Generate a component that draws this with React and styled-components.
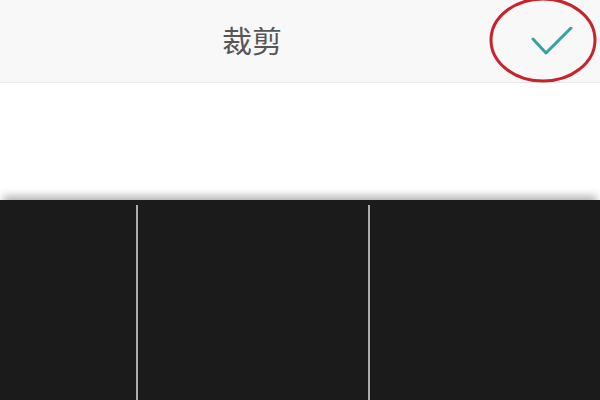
import styled, { createGlobalStyle } from "styled-components";

const GlobalStyle = createGlobalStyle`
  html, body {
    margin: 0;
    padding: 0;
    width: 600px;
    height: 400px;
    overflow: hidden;
    background: #ffffff;
  }
`;

function App() {
  return (
    <Screen>
      <GlobalStyle />
      <Header>
        <Title>裁剪</Title>
        <Confirm>
          <CheckIcon />
          <Circle viewBox="0 0 112 88">
            <ellipse cx="55" cy="42" rx="52" ry="41" fill="none" stroke="#c8222b" strokeWidth="3" />
          </Circle>
        </Confirm>
      </Header>
      <Blank />
      <CropArea>
        <Guide $width={138} />
        <Guide $width={232} />
        <Rest />
      </CropArea>
    </Screen>
  );
}

function CheckIcon() {
  return (
    <svg width="48" height="34" viewBox="0 0 48 34">
      <path d="M5 12 L18 26 L43 1" fill="none" stroke="#3aa29b" strokeWidth="3" strokeLinecap="round" strokeLinejoin="round" />
    </svg>
  );
}

const Screen = styled.div`
  width: 600px;
  height: 400px;
  display: flex;
  flex-direction: column;
  font-family: "Noto Sans CJK SC", "Noto Sans", sans-serif;
`;

const Header = styled.div`
  height: 82px;
  display: flex;
  align-items: center;
  background: #f8f8f8;
  border-bottom: 1px solid #e9e9e9;
  box-shadow: 0 1px 2px rgba(0, 0, 0, 0.04);
`;

const Title = styled.div`
  flex: 1;
  text-align: center;
  font-size: 30px;
  color: #565656;
  line-height: 1;
  margin-top: -4px;
`;

const Confirm = styled.div`
  position: relative;
  width: 96px;
  height: 82px;
  display: flex;
  align-items: center;
  justify-content: center;
  box-sizing: border-box;
  padding-top: 6px;
`;

const Circle = styled.svg`
  position: absolute;
  left: -16px;
  top: -2px;
  width: 112px;
  height: 88px;
`;

const Blank = styled.div`
  height: 117px;
  background: #ffffff;
`;

const CropArea = styled.div`
  flex: 1;
  display: flex;
  background: #1b1b1b;
  padding-top: 5px;
  box-shadow: 0 -7px 8px -3px rgba(0, 0, 0, 0.3);
`;

const Guide = styled.div`
  width: ${(p) => p.$width}px;
  border-right: 2px solid #acacac;
  box-sizing: border-box;
`;

const Rest = styled.div`
  flex: 1;
`;

export default App;
